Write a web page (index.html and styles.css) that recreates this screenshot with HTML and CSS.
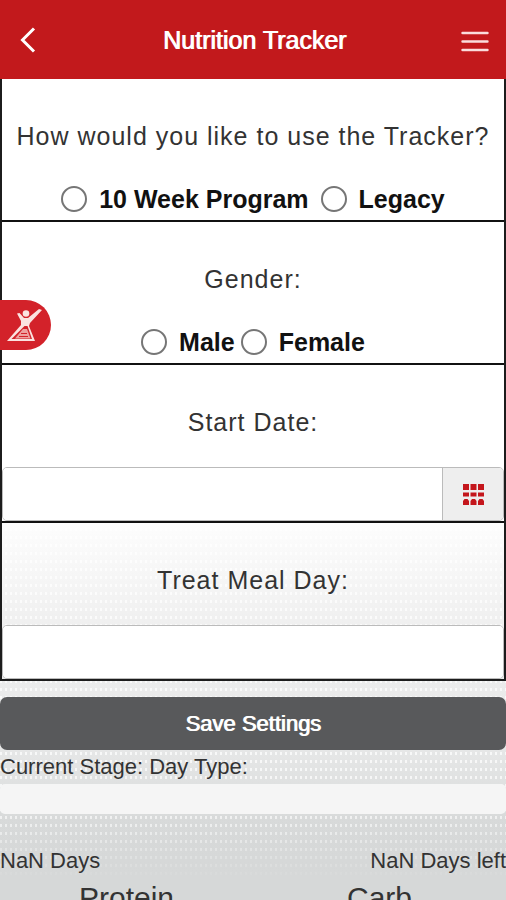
FILE: index.html
```html
<!DOCTYPE html>
<html lang="en">
<head>
    <meta charset="UTF-8">
    <meta name="viewport" content="width=device-width, initial-scale=1.0">
    <title>Nutrition Tracker</title>
    <link rel="stylesheet" href="styles.css">
</head>
<body>
    <header class="header">
        <a href="#" class="back" aria-label="Back">
            <svg width="16" height="26" viewBox="0 0 16 26"><path d="M14 1.5 2.5 13 14 24.5" fill="none" stroke="#fff" stroke-width="3"/></svg>
        </a>
        <h1>Nutrition Tracker</h1>
        <button type="button" class="menu" aria-label="Menu">
            <svg width="28" height="22" viewBox="0 0 28 22"><path d="M1.5 2h25M1.5 10.5h25M1.5 19h25" stroke="#fbdcdc" stroke-width="2.4" stroke-linecap="round"/></svg>
        </button>
    </header>

    <a href="#" class="side-tab" aria-label="Home">
        <svg width="36" height="34" viewBox="0 0 36 34">
            <path d="M10 5.500 12.500 5 17 10H21L32 1 35 2 23 15 22 18 28 33H0L14 17V13Z" fill="#fbe3e0"/>
            <circle cx="19" cy="5.500" r="3.300" fill="#fbe3e0"/>
            <path d="M17.500 18 4.500 31H25L20.500 18Z" fill="#d3222a"/>
            <path d="M16 21 8 30.500H23.500L20 21Z" fill="#eda19f"/>
            <path d="M12 28.500h9M14 25.500h6" stroke="#d3222a" stroke-width="1"/>
        </svg>
    </a>

    <main>
        <form>
            <div class="settings">
                <fieldset class="setting">
                    <legend>How would you like to use the Tracker?</legend>
                    <div class="options">
                        <label><input type="radio" name="program">10 Week Program</label>
                        <label><input type="radio" name="program">Legacy</label>
                    </div>
                </fieldset>
                <fieldset class="setting">
                    <legend>Gender:</legend>
                    <div class="options options-tight">
                        <label><input type="radio" name="gender">Male</label>
                        <label><input type="radio" name="gender">Female</label>
                    </div>
                </fieldset>
                <div class="setting">
                    <label class="setting-label" for="start-date">Start Date:</label>
                    <div class="input-wrap">
                        <input type="text" id="start-date">
                        <button type="button" class="calendar" aria-label="Pick a date">
                            <svg width="21" height="21" viewBox="0 0 21 21" fill="#c4161c">
                                <path d="M0 0h6v6H0zM7.500 0h6v6h-6zM15 0h6v6h-6zM0 8.500h6v4H0zM7.500 8.500h6v4h-6zM15 8.500h6v4h-6z"/>
                                <path d="M1.500 15h3L6 17v4H0v-4zM9 15h3l1.500 2v4h-6v-4zM16.500 15h3l1.500 2v4h-6v-4z"/>
                            </svg>
                        </button>
                    </div>
                </div>
                <div class="setting">
                    <label class="setting-label" for="treat-day">Treat Meal Day:</label>
                    <div class="input-wrap">
                        <input type="text" id="treat-day">
                    </div>
                </div>
            </div>
            <button type="button" class="save">Save Settings</button>
        </form>

        <p class="stage">Current Stage: Day Type:</p>
        <div class="progress"></div>
        <div class="days">
            <span>NaN Days</span>
            <span>NaN Days left</span>
        </div>
        <div class="macros">
            <h2>Protein</h2>
            <h2>Carb</h2>
        </div>
    </main>
</body>
</html>
```

FILE: styles.css
```css
*{
    margin: 0;
    padding: 0;
    box-sizing: border-box;
}

body{
    font-family: "Liberation Sans", Arial, sans-serif;
    font-size: 22px;
    line-height: 30px;
    color: #333;
    height: 100vh;
    overflow: hidden;
    background:
        linear-gradient(#fff, #fff) 0 0 / 100% 500px no-repeat,
        linear-gradient(transparent 810px, #d6d8d8 880px),
        conic-gradient(from 270deg at 2px 3px, rgba(255, 255, 255, .7) 90deg, transparent 0) 0 0 / 5px 8px,
        linear-gradient(#fff 510px, #f0f0f0 620px, #e6e7e7 750px, #d8dada 820px, #d4d6d6 900px);
}

button,
input{
    font: inherit;
}

.header{
    display: flex;
    align-items: center;
    justify-content: space-between;
    height: 79px;
    padding: 0 17px 0 20px;
    background: #c2191c;
}

.header h1{
    font-size: 25px;
    font-weight: 400;
    color: #fff;
    text-shadow: 1px 0 #fff;
}

.back,
.menu{
    display: flex;
    width: 32px;
    border: none;
    background: none;
}

.menu{
    justify-content: flex-end;
    padding-top: 4px;
}

.side-tab{
    position: fixed;
    left: 0;
    top: 300px;
    display: flex;
    align-items: center;
    width: 51px;
    height: 50px;
    padding-left: 7px;
    border-radius: 0 25px 25px 0;
    background: #d3222a;
}

.settings{
    border: 2px solid #1c1c1c;
    border-top: none;
}

.setting{
    border: none;
    border-bottom: 2px solid #111;
    padding-top: 42px;
    text-align: center;
}

.setting:last-child{
    border-bottom: none;
}

.setting legend,
.setting-label{
    float: left;
    width: 100%;
    font-size: 25px;
    letter-spacing: 1px;
}

.options{
    clear: both;
    display: flex;
    justify-content: center;
    gap: 12px;
    padding: 33px 0 6px;
    font-size: 25px;
    font-weight: 700;
    color: #111;
}

.options-tight{
    gap: 6px;
}

.options label{
    display: flex;
    align-items: center;
    gap: 12px;
}

.options input{
    appearance: none;
    width: 26px;
    height: 26px;
    border: 2px solid #767676;
    border-radius: 50%;
    background: #fff;
}

.options input:checked{
    border-width: 8px;
}

.input-wrap{
    clear: both;
    display: flex;
    height: 54px;
    border: 1px solid #bbb;
    border-radius: 5px;
    background: #fff;
    overflow: hidden;
}

.setting-label{
    padding-bottom: 30px;
}

.input-wrap input{
    flex: 1;
    min-width: 0;
    padding: 0 12px;
    border: none;
    outline: none;
}

.calendar{
    display: flex;
    align-items: center;
    justify-content: center;
    width: 61px;
    border: none;
    border-left: 1px solid #bbb;
    background: #eee;
}

.save{
    display: block;
    width: 100%;
    height: 53px;
    margin-top: 16px;
    border: none;
    border-radius: 7px;
    background: #58595b;
    color: #fff;
    text-shadow: 1px 0 #fff;
}

.stage{
    padding: 2px 0;
}

.progress{
    height: 30px;
    border-radius: 5px;
    background: #f5f5f5;
}

.days{
    display: flex;
    justify-content: space-between;
    padding-top: 32px;
}

.macros{
    display: grid;
    grid-template-columns: 1fr 1fr;
    text-align: center;
}

.macros h2{
    font-size: 30px;
    font-weight: 400;
    line-height: 44px;
}
```
